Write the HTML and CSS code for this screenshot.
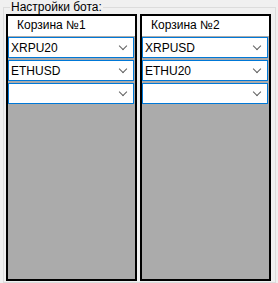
FILE: index.html
```html
<!DOCTYPE html>
<html>
<head>
	<title>Настройки бота</title>
	<link rel="stylesheet" href="styles.css">
</head>
<body>

	<fieldset class="settings">
		<legend>Настройки бота:</legend>

		<div class="baskets">
			<div class="basket">
				<div class="basket-title">Корзина №1</div>
				<div class="combo"><span>XRPU20</span><i class="arrow"></i></div>
				<div class="combo"><span>ETHUSD</span><i class="arrow"></i></div>
				<div class="combo"><span></span><i class="arrow"></i></div>
			</div>

			<div class="basket">
				<div class="basket-title">Корзина №2</div>
				<div class="combo"><span>XRPUSD</span><i class="arrow"></i></div>
				<div class="combo"><span>ETHU20</span><i class="arrow"></i></div>
				<div class="combo"><span></span><i class="arrow"></i></div>
			</div>
		</div>
	</fieldset>

</body>
</html>
```

FILE: styles.css
```css
body{
	margin: 0;
	background: #f0f0f0;
	font-family: "Liberation Sans", Arial, sans-serif;
	font-size: 12px;
	color: #000;
}

.settings{
	margin: 0 0 0 3px;
	padding: 0 2px 1px 2px;
	width: 267px;
	border: 1px solid #dcdcdc;
}

.settings legend{
	margin-left: 4px;
	padding: 0 1px;
	line-height: 14px;
	color: #000;
}

.baskets{
	display: grid;
	grid-template-columns: 131px 131px;
	grid-column-gap: 3px;
}

.basket{
	height: 263px;
	border: 2px solid #000;
	background: #ababab;
}

.basket-title{
	height: 20px;
	line-height: 18px;
	padding-left: 9px;
	background: #fff;
}

.combo{
	display: flex;
	align-items: center;
	justify-content: space-between;
	box-sizing: border-box;
	width: 126px;
	height: 21px;
	margin-bottom: 2px;
	padding: 0 7px 0 2px;
	background: #fff;
	border: 1px solid #0078d7;
}

.basket-title + .combo{
	margin-top: 1px;
}

.arrow{
	width: 5px;
	height: 5px;
	margin-top: -4px;
	border-right: 1px solid #606060;
	border-bottom: 1px solid #606060;
	transform: rotate(45deg);
}
```
